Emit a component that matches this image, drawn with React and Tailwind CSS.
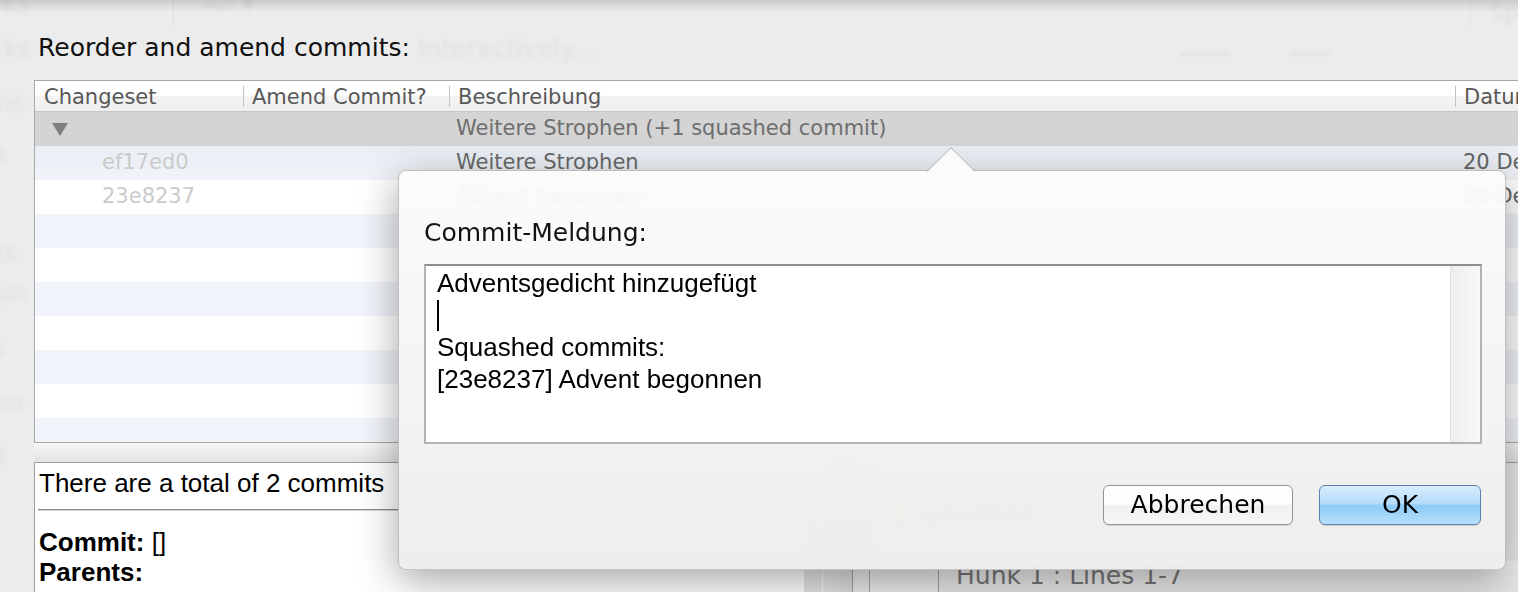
import React from "react";

const LG = "font-['DejaVu_Sans',Verdana,sans-serif]";
const HV = "font-['Liberation_Sans',Arial,sans-serif]";

function Ghost() {
  const g = "absolute text-[25px] leading-[30px] text-[rgba(0,0,0,0.055)] blur-[2px] whitespace-nowrap";
  return (
    <>
      <div className={g + " left-[-8px] top-[-10px]"}>rks</div>
      <div className={g + " left-[203px] top-[-11px]"}>All ▾</div>
      <div className={g + " left-[1488px] top-[-2px]"}>Sp</div>
      <div className="absolute left-[173px] top-0 w-px h-[26px] bg-[rgba(0,0,0,0.05)]" />
      <div className="absolute left-[1470px] top-0 w-px h-[26px] bg-[rgba(0,0,0,0.04)]" />
      <div className={g + " left-[-6px] top-[34px]"}>rks</div>
      <div className={g + " left-[418px] top-[34px]"}>Interactively...</div>
      <div className="absolute left-[1180px] top-[52px] w-[50px] h-[4px] bg-[rgba(0,0,0,0.03)] blur-[1px]" />
      <div className="absolute left-[1290px] top-[52px] w-[40px] h-[4px] bg-[rgba(0,0,0,0.03)] blur-[1px]" />
      <div className={g + " left-[-4px] top-[88px]"}>ns</div>
      <div className={g + " left-[-6px] top-[140px]"}>s</div>
      <div className={g + " left-[-10px] top-[238px]"}>ks</div>
      <div className={g + " left-[-12px] top-[278px]"}>gin</div>
      <div className={g + " left-[-8px] top-[334px]"}>s</div>
      <div className={g + " left-[-14px] top-[388px]"}>ion</div>
      <div className={g + " left-[-6px] top-[440px]"}>s</div>
    </>
  );
}

function HeaderSep() {
  return <div className="w-px h-[21px] bg-[#c3c3c3] shrink-0" />;
}

function Header() {
  return (
    <div className="flex items-center h-[31px] border-b border-[#c6c6c6] bg-[linear-gradient(to_bottom,#ffffff_0%,#ffffff_48%,#f3f3f3_52%,#efefef_100%)] text-[21px] text-[#585858] whitespace-nowrap">
      <div className="w-[208px] pl-[9px] shrink-0 translate-y-[2px]">Changeset</div>
      <HeaderSep />
      <div className="w-[205px] pl-[8px] shrink-0 translate-y-[2px]">Amend Commit?</div>
      <HeaderSep />
      <div className="w-[1005px] pl-[8px] shrink-0 translate-y-[2px]">Beschreibung</div>
      <HeaderSep />
      <div className="pl-[8px] translate-y-[2px]">Datum</div>
    </div>
  );
}

const rows = [
  { type: "group", desc: "Weitere Strophen (+1 squashed commit)" },
  { hash: "ef17ed0", desc: "Weitere Strophen", date: "20 Dez 2012 12:14" },
  { hash: "23e8237", desc: "Advent begonnen", date: "20 Dez 2012 12:02" },
  {}, {}, {}, {}, {}, {}, {},
];

function Row({ r, i }) {
  if (r.type === "group") {
    return (
      <div className="flex items-center h-[34px] bg-[#d4d4d4] text-[21px] text-[#6e6e6e] whitespace-nowrap">
        <div className="w-[208px] pl-[17px] shrink-0 flex items-center">
          <svg width="16" height="13" viewBox="0 0 16 13">
            <polygon points="0,0 16,0 8,13" fill="#7f7f7f" />
          </svg>
        </div>
        <div className="w-[206px] shrink-0" />
        <div className="w-[1006px] pl-[7px] shrink-0">{r.desc}</div>
      </div>
    );
  }
  const bg = i === 1 ? "bg-[linear-gradient(to_bottom,#e9eef5,#f1f4f9)]" : i % 2 === 1 ? "bg-[#f1f4fa]" : "bg-white";
  return (
    <div className={"flex items-center h-[34px] text-[21px] whitespace-nowrap " + bg}>
      <div className="w-[208px] pl-[67px] shrink-0 text-[#cbcbcb]">{r.hash}</div>
      <div className="w-[206px] shrink-0" />
      <div className="w-[1006px] pl-[7px] shrink-0 text-[#6a6a6a]">{r.desc}</div>
      <div className="pl-[8px] text-[#666666]">{r.date}</div>
    </div>
  );
}

function Popover() {
  return (
    <div className="absolute left-[398px] top-[170px] w-[1108px] h-[400px] rounded-[8px] border border-[rgba(150,150,150,0.55)] bg-[linear-gradient(to_bottom,rgba(251,251,251,0.95),rgba(237,237,237,0.955))] backdrop-blur-[2px] shadow-[0_10px_40px_rgba(0,0,0,0.36)] pt-[47px] pl-[25px] pr-[23px]">
      <svg className="absolute left-[528px] top-[-24px]" width="48" height="25" viewBox="0 0 48 25">
        <polygon points="0,25 24,0.8 48,25" fill="#fbfbfb" />
        <polyline points="0,24.5 24,0.8 48,24.5" fill="none" stroke="#b4b4b4" strokeWidth="1" />
      </svg>
      <div className="h-[46px] text-[25px] leading-[30px] text-[#111]">Commit‑Meldung:</div>
      <div className="h-[180px] flex border-2 border-[#b3b3b3] border-t-[#8e8e8e] bg-white">
        <div className={"flex-1 pl-[11px] pt-[1px] text-[26px] leading-[32px] text-black " + HV}>
          <div>Adventsgedicht hinzugefügt</div>
          <div className="h-[32px] flex items-center">
            <span className="block w-[2px] h-[31px] bg-black" />
          </div>
          <div>Squashed commits:</div>
          <div>[23e8237] Advent begonnen</div>
        </div>
        <div className="w-[30px] border-l border-[#e0e0e0] bg-[linear-gradient(to_right,#eeeeee,#f9f9f9)]" />
      </div>
      <div className="mt-[41px] mr-[1px] flex justify-end gap-[26px]">
        <button className="w-[190px] h-[40px] rounded-[6px] border border-[#939393] bg-[linear-gradient(to_bottom,#ffffff_0%,#fcfcfc_48%,#f0f0f0_52%,#f7f7f7_100%)] shadow-[0_1px_1px_rgba(0,0,0,0.12)] text-[25px] leading-[30px] text-black">
          Abbrechen
        </button>
        <button className="w-[162px] h-[40px] rounded-[6px] border border-[#5b82ae] bg-[linear-gradient(to_bottom,#d8edfd_0%,#b5dcfa_46%,#8dcbf7_52%,#b6dffb_100%)] shadow-[0_1px_1px_rgba(0,0,0,0.15)] text-[25px] leading-[30px] text-black">
          OK
        </button>
      </div>
    </div>
  );
}

export default function App() {
  return (
    <div className={"relative w-[1518px] h-[592px] overflow-hidden bg-[#ececec] " + LG}>
      <Ghost />
      <div className="absolute inset-x-0 top-0 h-[12px] bg-[linear-gradient(to_bottom,rgba(0,0,0,0.14),rgba(0,0,0,0))]" />
      <div className="relative pt-[33px] pl-[34px]">
        <div className="h-[47px] pl-[4px] text-[25px] leading-[30px] text-[#111]">Reorder and amend commits:</div>
        <div className="w-[1520px] border-t border-l border-b border-[#a8a8a8]">
          <Header />
          <div className="h-[330px] overflow-hidden">
            {rows.map((r, i) => (
              <Row key={i} r={r} i={i} />
            ))}
          </div>
        </div>
        <div className="h-[19px] bg-[linear-gradient(to_bottom,#f7f7f7,#e3e3e3)]" />
        <div className="flex h-[140px] border-t border-[#9d9d9d]">
          <div className={"w-[770px] shrink-0 bg-white border-l border-[#9a9a9a] pl-[4px] text-[26px] leading-[30px] text-black " + HV}>
            <div className="pt-[5px]">There are a total of 2 commits</div>
            <div className="mt-[11px] ml-[-1px] h-[2px] border-t border-[#8a8a8a] border-b border-b-[#d6d6d6]" />
            <div className="mt-[16px]"><b>Commit:</b> []</div>
            <div><b>Parents:</b></div>
            <div><b>Author:</b></div>
          </div>
          <div className="w-[19px] shrink-0 bg-[linear-gradient(to_bottom,#efefef,#e2e2e2)] border-r border-[#f8f8f8]" />
          <div className="w-[30px] shrink-0 bg-[linear-gradient(to_right,#e6e6e6,#dcdcdc)] border-r border-[#9e9e9e]" />
          <div className="w-[17px] shrink-0 bg-[#e9e9e9] border-r border-[#a2a2a2]" />
          <div className="flex-1 flex flex-col bg-[#ebebeb]">
            <div className="mt-[36px] h-[28px] flex items-center pl-[18px] gap-[12px] opacity-60">
              <span className="block w-[22px] h-[22px] rounded-full bg-[radial-gradient(circle_at_40%_35%,#fff3b0,#f1c94a)]" />
              <span className="text-[22px] text-[#555]">advent.txt</span>
            </div>
            <div className="mt-[34px] ml-[68px] flex-1 border-l border-[#a0a0a0] bg-[linear-gradient(to_bottom,#f2f2f2,#e2e2e2)] pl-[17px] text-[25px] leading-[30px] text-[#767676]">
              Hunk 1 : Lines 1-7
            </div>
          </div>
        </div>
      </div>
      <Popover />
    </div>
  );
}
